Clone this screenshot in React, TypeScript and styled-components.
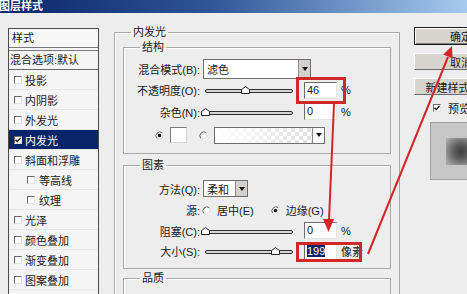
import styled, { createGlobalStyle } from 'styled-components';

const FONT = `"Liberation Sans", "Noto Sans CJK SC", sans-serif`;

const GlobalStyle = createGlobalStyle`
  html, body {
    margin: 0;
    padding: 0;
  }
  body {
    background: #ededed;
    font-family: ${FONT};
    font-size: 11px;
    color: #1a1a1a;
  }
`;

const styleItems = [
  { label: '投影' },
  { label: '内阴影' },
  { label: '外发光' },
  { label: '内发光', checked: true, active: true },
  { label: '斜面和浮雕' },
  { label: '等高线', indent: true },
  { label: '纹理', indent: true },
  { label: '光泽' },
  { label: '颜色叠加' },
  { label: '渐变叠加' },
  { label: '图案叠加' },
  { label: '描边' },
];

const CheckMark = () => (
  <svg width="6" height="6" viewBox="0 0 6 6">
    <path d="M0.5 2.8 L2.3 4.6 L5.6 0.9" fill="none" stroke="#111" strokeWidth="1.4" />
  </svg>
);

const Radio = ({ on }: { on?: boolean }) => (
  <RadioIcon viewBox="0 0 9 9">
    <circle cx="4.5" cy="4.5" r="4" fill="#fff" />
    <path d="M7.3 1.7 A4 4 0 0 0 1.7 7.3" fill="none" stroke="#5a5a5a" />
    <path d="M1.7 7.3 A4 4 0 0 0 7.3 1.7" fill="none" stroke="#d8d8d8" />
    {on && <circle cx="4.5" cy="4.5" r="1.7" fill="#111" />}
  </RadioIcon>
);

// ratio 0..1 along the 88px track
const Slider = ({ ratio }: { ratio: number }) => (
  <SliderArea>
    <Track />
    <Thumb viewBox="0 0 9 8" style={{ left: 2 + ratio * 88 - 4.5 }}>
      <path d="M0.5 7.5 V3.6 L4.5 0.6 L8.5 3.6 V7.5 Z" fill="#fff" stroke="#222" />
    </Thumb>
  </SliderArea>
);

export default function App() {
  return (
    <>
      <GlobalStyle />
      <Window>
        <TitleBar>图层样式</TitleBar>
        <Body>
          <StyleList>
            <ListHeader>样式</ListHeader>
            <BlendRow>混合选项:默认</BlendRow>
            {styleItems.map(item => (
              <StyleRow key={item.label} $active={item.active} $indent={item.indent}>
                <CheckBox>{item.checked && <CheckMark />}</CheckBox>
                <span>{item.label}</span>
              </StyleRow>
            ))}
          </StyleList>

          <OuterGroup>
            <Legend $offset={8}>内发光</Legend>

            <SubGroup>
              <Legend $offset={16}>结构</Legend>
              <GroupBody $top={5} $bottom={5}>
                <Row $h={20}>
                  <Label>混合模式(B):</Label>
                  <Select $w={108} $h={20}>
                    <SelectText>滤色</SelectText>
                    <DropButton />
                  </Select>
                </Row>
                <Row $h={22}>
                  <Label>不透明度(O):</Label>
                  <Slider ratio={0.46} />
                  <NumberBox>46</NumberBox>
                  <Unit>%</Unit>
                </Row>
                <Row $h={21}>
                  <Label>杂色(N):</Label>
                  <Slider ratio={0} />
                  <NumberBox>0</NumberBox>
                  <Unit>%</Unit>
                </Row>
                <Row $h={26} $pad={31}>
                  <Radio on />
                  <Swatch />
                  <Spacer $w={12} />
                  <Radio />
                  <GradientBox>
                    <DropButton $light />
                  </GradientBox>
                </Row>
              </GroupBody>
            </SubGroup>

            <SubGroup $gap={4}>
              <Legend $offset={16}>图素</Legend>
              <GroupBody $top={6} $bottom={6}>
                <Row $h={21}>
                  <Label>方法(Q):</Label>
                  <Select $w={45} $h={17}>
                    <SelectText>柔和</SelectText>
                    <DropButton />
                  </Select>
                </Row>
                <Row $h={22}>
                  <Label $gap={2}>源:</Label>
                  <Radio />
                  <RadioText>居中(E)</RadioText>
                  <Spacer $w={17} />
                  <Radio on />
                  <RadioText>边缘(G)</RadioText>
                </Row>
                <Row $h={19}>
                  <Label>阻塞(C):</Label>
                  <Slider ratio={0} />
                  <NumberBox>0</NumberBox>
                  <Unit>%</Unit>
                </Row>
                <Row $h={22}>
                  <Label>大小(S):</Label>
                  <Slider ratio={199 / 250} />
                  <NumberBox>
                    <Selected>199</Selected>
                  </NumberBox>
                  <Unit>像素</Unit>
                </Row>
              </GroupBody>
            </SubGroup>

            <SubGroup $gap={2}>
              <Legend $offset={16}>品质</Legend>
              <GroupBody $top={4} $bottom={30} />
            </SubGroup>
          </OuterGroup>

          <Side>
            <Button $default>确定</Button>
            <Button>取消</Button>
            <Button>新建样式(W)...</Button>
            <PreviewCheck>
              <CheckBox>
                <CheckMark />
              </CheckBox>
              <span>预览</span>
            </PreviewCheck>
            <Preview>
              <PreviewSwatch />
            </Preview>
          </Side>
        </Body>

        <Annotations width="467" height="294" viewBox="0 0 467 294">
          <rect x="297.5" y="78.5" width="47" height="24" fill="none" stroke="#d42626" strokeWidth="3" />
          <rect x="297.5" y="243.5" width="63" height="17" fill="none" stroke="#d42626" strokeWidth="3" />
          <line x1="334" y1="104" x2="329" y2="220" stroke="#d42626" strokeWidth="2" />
          <polygon points="323,219 334,219 328.5,232" fill="#d42626" />
          <line x1="368" y1="254" x2="448" y2="57" stroke="#d42626" strokeWidth="2" />
          <polygon points="443.3,54.5 452.6,58.3 452,46" fill="#d42626" />
        </Annotations>
      </Window>
    </>
  );
}

const Window = styled.div`
  position: relative;
  width: 467px;
  height: 294px;
  overflow: hidden;
  background: #ededed;
`;

const TitleBar = styled.div`
  height: 13px;
  line-height: 12px;
  padding-left: 0;
  margin-left: -1px;
  background: linear-gradient(90deg, #0a246a 0%, #2f5596 45%, #a6caf0 100%);
  color: #fff;
  font-weight: bold;
  font-size: 11px;
  overflow: hidden;
`;

const Body = styled.div`
  display: flex;
  align-items: flex-start;
`;

const StyleList = styled.div`
  flex-shrink: 0;
  width: 91px;
  height: 300px;
  box-sizing: border-box;
  margin: 15px 0 0 8px;
  border: 1px solid #4a4a4a;
  background: #f5f5f5;
`;

const ListHeader = styled.div`
  height: 18px;
  line-height: 18px;
  padding-left: 3px;
  background: #f7f7f7;
  border-bottom: 4px double #7a7a7a;
`;

const BlendRow = styled.div`
  height: 18px;
  line-height: 18px;
  padding-left: 1px;
  border-bottom: 1px solid #6a6a6a;
  white-space: nowrap;
`;

const StyleRow = styled.div<{ $active?: boolean; $indent?: boolean }>`
  display: flex;
  align-items: center;
  gap: ${p => (p.$indent ? 4 : 3)}px;
  height: 19px;
  padding-left: ${p => (p.$indent ? 18 : 5)}px;
  border-bottom: 1px solid #e6e6e6;
  background: ${p => (p.$active ? '#0a246a' : 'transparent')};
  color: ${p => (p.$active ? '#fff' : '#1a1a1a')};
  white-space: nowrap;
`;

const CheckBox = styled.span`
  display: flex;
  align-items: center;
  justify-content: center;
  width: 8px;
  height: 8px;
  box-sizing: border-box;
  flex-shrink: 0;
  background: #fff;
  border: 1px solid;
  border-color: #6a6a6a #e2e2e2 #e2e2e2 #6a6a6a;
`;

const OuterGroup = styled.fieldset`
  flex-shrink: 0;
  box-sizing: border-box;
  width: 286px;
  height: 300px;
  min-width: 0;
  margin: 12px 0 0 15px;
  padding: 1px 8px 0 8px;
  border: 1px solid #a9a9a9;
  box-shadow: inset 1px 1px 0 #fff;
`;

const SubGroup = styled.fieldset<{ $gap?: number }>`
  min-width: 0;
  margin: ${p => p.$gap ?? 0}px 0 0 0;
  padding: 0;
  border: 1px solid #a9a9a9;
  box-shadow: inset 1px 1px 0 #fff;
`;

const Legend = styled.legend<{ $offset: number }>`
  margin-left: ${p => p.$offset}px;
  padding: 0 2px;
  line-height: 14px;
  font-size: 11px;
  color: #1a1a1a;
`;

const GroupBody = styled.div<{ $top: number; $bottom: number }>`
  display: flex;
  flex-direction: column;
  padding: ${p => p.$top}px 0 ${p => p.$bottom}px 0;
`;

const Row = styled.div<{ $h: number; $pad?: number }>`
  display: flex;
  align-items: center;
  height: ${p => p.$h}px;
  padding-left: ${p => p.$pad ?? 0}px;
  white-space: nowrap;
`;

const Label = styled.span<{ $gap?: number }>`
  flex-shrink: 0;
  width: 76px;
  margin-right: ${p => p.$gap ?? 3}px;
  text-align: right;
`;

const Select = styled.div<{ $w: number; $h: number }>`
  display: flex;
  width: ${p => p.$w}px;
  height: ${p => p.$h}px;
  box-sizing: border-box;
  border: 1px solid #6e6e6e;
  background: #fff;
`;

const SelectText = styled.span`
  flex: 1;
  padding-left: 3px;
  display: flex;
  align-items: center;
`;

const DropButton = styled.span<{ $light?: boolean }>`
  display: flex;
  align-items: center;
  justify-content: center;
  width: 11px;
  margin-left: auto;
  background: ${p => (p.$light ? '#fff' : '#d4d1cc')};
  border-left: 1px solid #8a8a8a;

  &::after {
    content: '';
    border-top: 4px solid #111;
    border-left: 3px solid transparent;
    border-right: 3px solid transparent;
  }
`;

const SliderArea = styled.div`
  position: relative;
  flex-shrink: 0;
  width: 92px;
  height: 12px;
`;

const Track = styled.div`
  margin: 5px 2px 0;
  height: 2px;
  border: 1px solid #2e2e2e;
  border-radius: 2px;
  background: #d6d6d6;
`;

const Thumb = styled.svg`
  position: absolute;
  top: 2px;
  width: 9px;
  height: 8px;
`;

const NumberBox = styled.div`
  flex-shrink: 0;
  width: 33px;
  height: 17px;
  box-sizing: border-box;
  margin-left: 9px;
  padding-left: 2px;
  line-height: 15px;
  background: #fff;
  border: 1px solid;
  border-color: #6e6e6e #e4e4e4 #e4e4e4 #6e6e6e;
`;

const Selected = styled.span`
  background: #0a246a;
  color: #fff;
`;

const Unit = styled.span`
  margin-left: 4px;
`;

const RadioIcon = styled.svg`
  flex-shrink: 0;
  width: 9px;
  height: 9px;
`;

const RadioText = styled.span`
  margin-left: 6px;
`;

const Spacer = styled.span<{ $w: number }>`
  width: ${p => p.$w}px;
  flex-shrink: 0;
`;

const Swatch = styled.div`
  width: 17px;
  height: 16px;
  box-sizing: border-box;
  margin-left: 6px;
  background: #fff;
  border: 1px solid;
  border-color: #7a7a7a #d8d8d8 #d8d8d8 #7a7a7a;
`;

const GradientBox = styled.div`
  display: flex;
  width: 111px;
  height: 17px;
  box-sizing: border-box;
  margin-left: 6px;
  border: 1px solid #6e6e6e;
  background:
    linear-gradient(90deg, #fff 0%, rgba(255, 255, 255, 0.2) 75%, rgba(255, 255, 255, 0) 100%),
    conic-gradient(#dedede 25%, #fff 0 50%, #dedede 0 75%, #fff 0) 0 0 / 8px 8px;
`;

const Side = styled.div`
  flex-shrink: 0;
  display: flex;
  flex-direction: column;
  width: 94px;
  margin: 14px 0 0 14px;
`;

const Button = styled.div<{ $default?: boolean }>`
  height: ${p => (p.$default ? 18 : 17)}px;
  margin-bottom: 8px;
  box-sizing: border-box;
  display: flex;
  align-items: center;
  justify-content: center;
  background: #d7d4cf;
  border: 1px solid;
  border-color: ${p => (p.$default ? '#1c1c1c' : '#fdfdfd #6c6c6c #6c6c6c #fdfdfd')};
  box-shadow: ${p => (p.$default ? 'inset 1px 1px 0 #fff, inset -1px -1px 0 #7c7c7c' : 'none')};
  white-space: nowrap;
`;

const PreviewCheck = styled.div`
  display: flex;
  align-items: center;
  gap: 7px;
  height: 16px;
  margin-top: -3px;
  padding-left: 19px;
`;

const Preview = styled.div`
  width: 62px;
  height: 58px;
  box-sizing: border-box;
  margin: 6px 0 0 16px;
  padding: 15px 0 0 15px;
  background: #c6c6c6;
  border: 1px solid #a2a2a2;
`;

const PreviewSwatch = styled.div`
  width: 30px;
  height: 27px;
  background: radial-gradient(circle at 50% 50%, #3e3e3e 0%, #5c5c5c 35%, #9a9a9a 80%, #b4b4b4 100%);
`;

const Annotations = styled.svg`
  position: absolute;
  top: 0;
  left: 0;
  pointer-events: none;
`;
